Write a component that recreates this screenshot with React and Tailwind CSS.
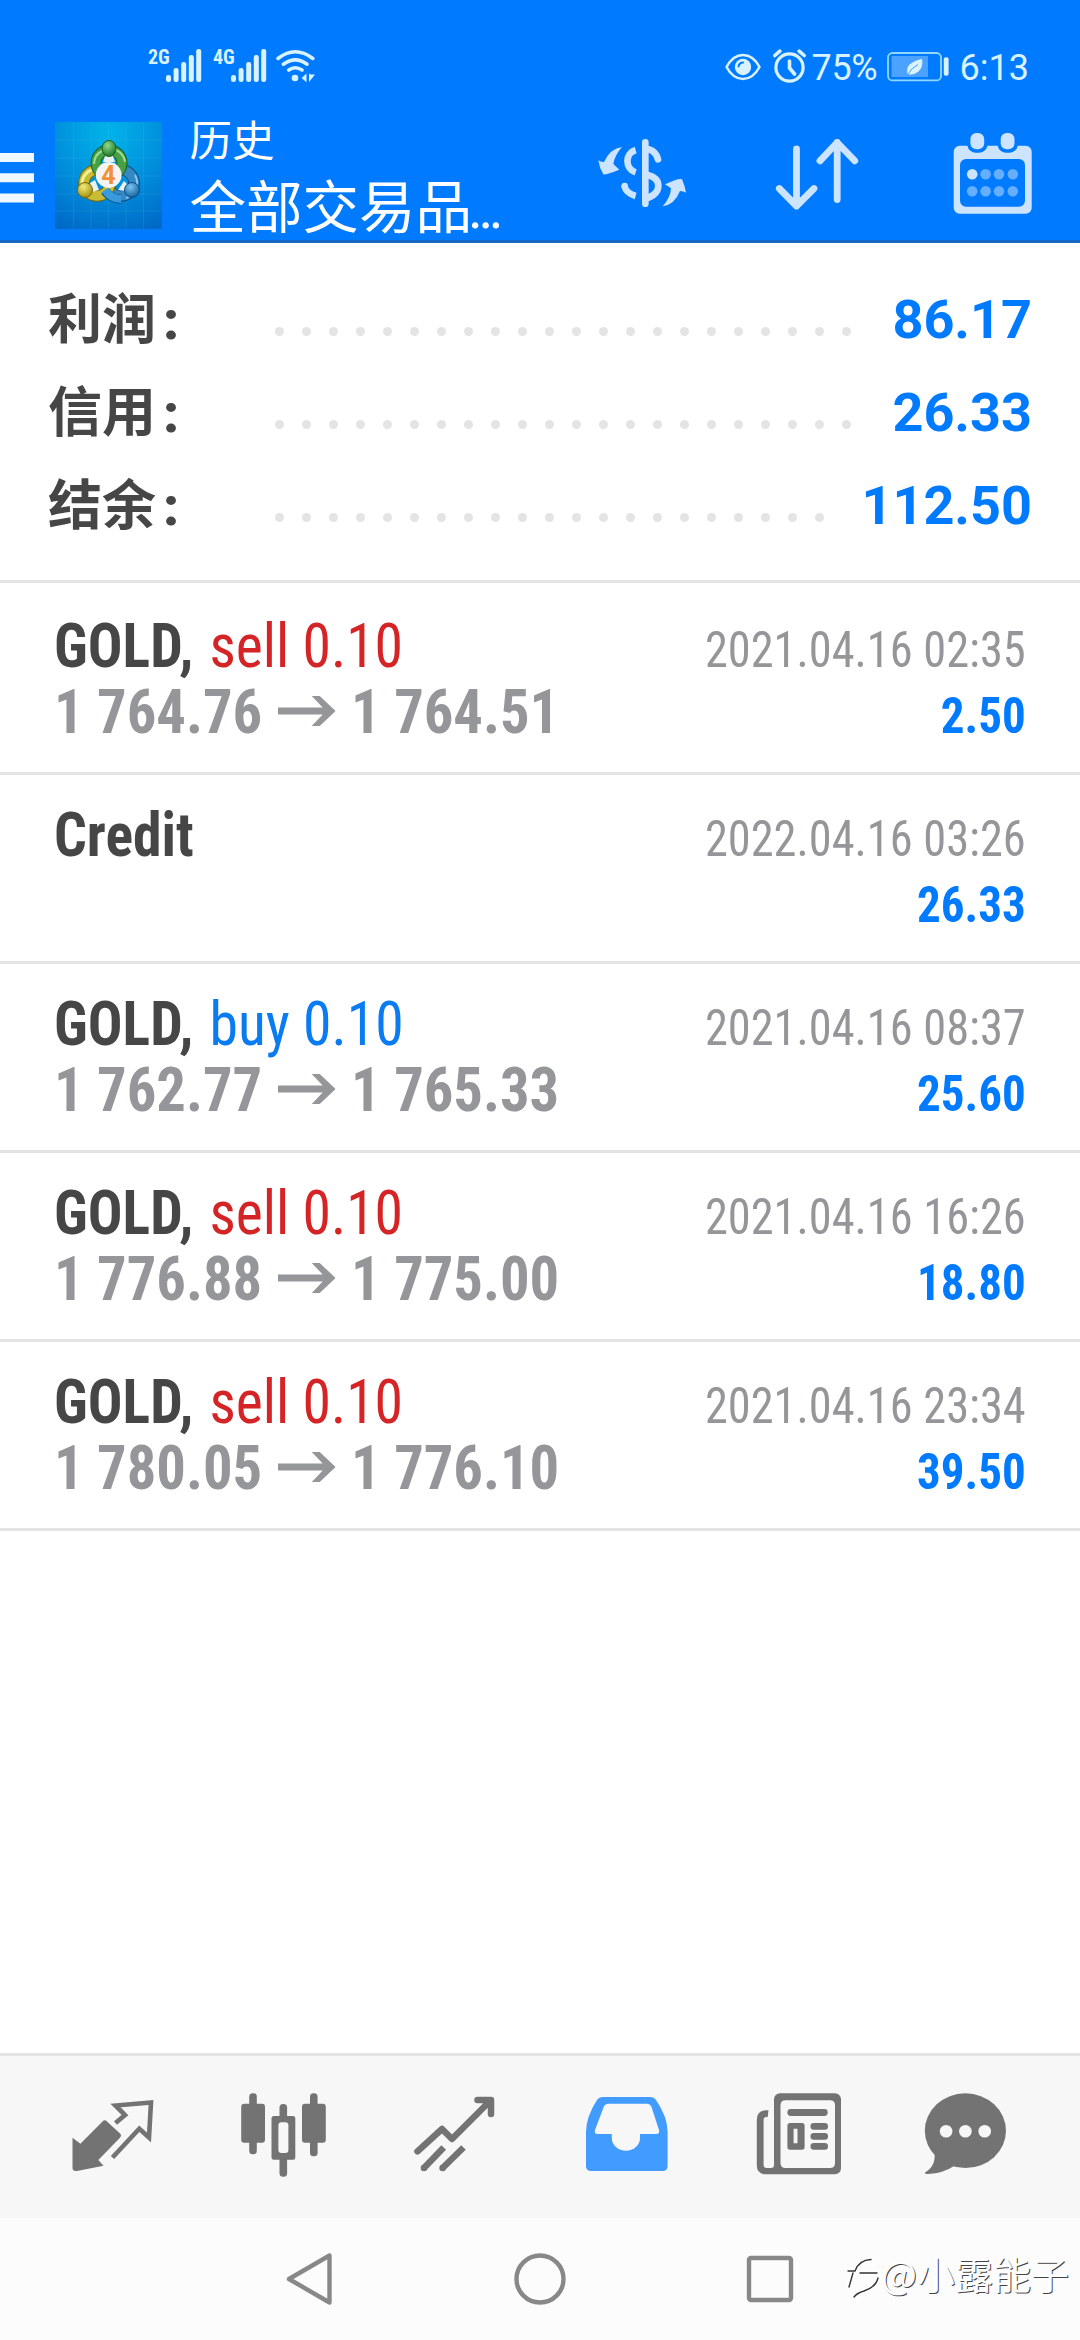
const summary = [
  { label: '利润', value: '86.17', dots: 22 },
  { label: '信用', value: '26.33', dots: 22 },
  { label: '结余', value: '112.50', dots: 21 },
];

const deals = [
  { id: 1, symbol: 'GOLD', side: 'sell', volume: '0.10', open: '1 764.76', close: '1 764.51', time: '2021.04.16 02:35', profit: '2.50' },
  { id: 2, symbol: 'Credit', time: '2022.04.16 03:26', profit: '26.33' },
  { id: 3, symbol: 'GOLD', side: 'buy', volume: '0.10', open: '1 762.77', close: '1 765.33', time: '2021.04.16 08:37', profit: '25.60' },
  { id: 4, symbol: 'GOLD', side: 'sell', volume: '0.10', open: '1 776.88', close: '1 775.00', time: '2021.04.16 16:26', profit: '18.80' },
  { id: 5, symbol: 'GOLD', side: 'sell', volume: '0.10', open: '1 780.05', close: '1 776.10', time: '2021.04.16 23:34', profit: '39.50' },
];

function Signal({ label }) {
  return (
    <div className="flex w-[54px]">
      <span className="w-[18px] font-['Roboto_Condensed'] font-bold text-[20px] leading-[18px]">{label}</span>
      <svg width="36" height="36" viewBox="0 0 36 36" fill="currentColor">
        <rect x="0" y="27" width="5" height="7" rx="2.3" />
        <rect x="7.6" y="20" width="5" height="14" rx="2.3" />
        <rect x="15.2" y="14" width="5" height="20" rx="2.3" />
        <rect x="22.8" y="7" width="5" height="27" rx="2.3" />
        <rect x="30.2" y="1" width="5" height="33" rx="2.3" />
      </svg>
    </div>
  );
}

function StatusBar() {
  return (
    <div className="flex h-[90px] items-start justify-between pl-[148px] pr-[51px] pt-[48px] text-[#d9f2ff]">
      <div className="flex">
        <Signal label="2G" />
        <div className="ml-[11px]"><Signal label="4G" /></div>
        <svg className="ml-[9px]" width="40" height="36" viewBox="0 0 40 36" fill="none" stroke="currentColor" strokeWidth="3.6" strokeLinecap="round">
          <path d="M2 10.5Q19.3-3 36.8 10.5M7.4 16.2Q19.3 7.5 31 16.2M12.8 22Q19.3 17.5 26 22" />
          <circle cx="19" cy="30" r="3.3" fill="currentColor" stroke="none" />
          <path d="M25.6 30l4.9-4.5v8.7zM33 25.5v8.5l6-7.5h-4z" fill="currentColor" stroke="none" />
        </svg>
      </div>

      <div className="flex">
        <svg className="mt-[5px]" width="36" height="28" viewBox="0 0 36 28" fill="none" stroke="currentColor">
          <path d="M1.5 14Q8 2 18 2T34.5 14Q28 26 18 26T1.5 14z" strokeWidth="2.6" strokeLinejoin="round" />
          <circle cx="18" cy="14" r="8.2" fill="currentColor" stroke="none" />
          <path d="M13.6 13.5Q14 10 18 9.6" stroke="#007aff" strokeWidth="2" strokeLinecap="round" />
        </svg>
        <svg className="ml-[12px] mt-px" width="34" height="35" viewBox="0 0 34 35" fill="none" stroke="currentColor" strokeWidth="3.2" strokeLinecap="round">
          <circle cx="16.5" cy="18.5" r="13.6" />
          <path d="M16.5 12v7l5 6M1.8 6.5l5-4.3M31.2 6.5l-5-4.3" strokeWidth="3.6" />
        </svg>
        <span className="ml-[5px] mt-[-1px] w-[68px] text-[36px] leading-[42px] tracking-[-0.4px]">75%</span>
        <svg className="ml-[7px] mt-[4px]" width="63" height="30" viewBox="0 0 63 30" fill="none">
          <rect x="1" y="1" width="53" height="27.4" rx="4.5" stroke="#8fd8ff" strokeWidth="1.8" />
          <rect x="4.6" y="4" width="36.4" height="21" fill="#4ca2ff" />
          <path d="M21 22.8Q18.5 17 22.5 12.5 26.5 9 35 6.7 36.5 15 31.5 19.5 27.5 23 22 22.3z" fill="#d9f2ff" />
          <path d="M20.5 23Q24 16 31 12.5" stroke="#4ca2ff" strokeWidth="1" />
          <rect x="56.8" y="5.3" width="4.8" height="18.5" rx="2" fill="#d9f2ff" />
        </svg>
        <span className="ml-[10px] mt-[-1px] text-[36px] leading-[42px]">6:13</span>
      </div>
    </div>
  );
}

function Logo() {
  return (
    <svg width="107" height="107" viewBox="0 0 107 107">
      <defs>
        <radialGradient id="bg" cx="0.5" cy="0.1" r="1">
          <stop offset="0" stopColor="#00b4ea" />
          <stop offset="0.5" stopColor="#0090dc" />
          <stop offset="1" stopColor="#0068c6" />
        </radialGradient>
        <radialGradient id="green" cx="0.4" cy="0.3" r="0.7">
          <stop offset="0" stopColor="#8fd98a" />
          <stop offset="1" stopColor="#1e7a2c" />
        </radialGradient>
        <radialGradient id="yellow" cx="0.4" cy="0.3" r="0.7">
          <stop offset="0" stopColor="#f3ea7a" />
          <stop offset="1" stopColor="#a39410" />
        </radialGradient>
        <radialGradient id="blue" cx="0.4" cy="0.3" r="0.7">
          <stop offset="0" stopColor="#7cc6f2" />
          <stop offset="1" stopColor="#14629f" />
        </radialGradient>
      </defs>
      <rect width="107" height="107" fill="url(#bg)" />
      <path d="M18.5 0v107M36 0v107M53.5 0v107M71 0v107M88.5 0v107M0 18h107M0 36h107M0 54h107M0 72h107M0 89h107" stroke="#5cc0f5" strokeOpacity="0.16" />
      <g fill="none">
        <circle cx="66" cy="61" r="13" stroke="#0f4f86" strokeWidth="11.5" />
        <circle cx="66" cy="61" r="13" stroke="#3488c4" strokeWidth="9.5" />
        <path d="M80 53a16 16 0 0 1-9 23" stroke="#86c8f0" strokeWidth="2" />
        <circle cx="42" cy="61" r="13" stroke="#766a0c" strokeWidth="11.5" />
        <circle cx="42" cy="61" r="13" stroke="#c9bc32" strokeWidth="9.5" />
        <path d="M27 62a15 15 0 0 1 14-15" stroke="#f4ee96" strokeWidth="3" />
        <path d="M50 69q6 8 16 8" stroke="#0f4f86" strokeWidth="9.500" />
        <path d="M50 68q6 9 16 9" stroke="#3a9bdc" strokeWidth="8" />
        <circle cx="54" cy="41" r="13" stroke="#1d5f25" strokeWidth="11" />
        <circle cx="54" cy="41" r="13" stroke="#46a044" strokeWidth="9" />
        <path d="M39 42a15 15 0 0 1 8-13M61 28a15 15 0 0 1 9 12" stroke="#9cdc94" strokeWidth="2" />
      </g>
      <path d="M50 34h8l2 6H48zM35 61l5-3 4 10-7 2zM63 68l6-9 3 3-2 7z" fill="#e9f3ee" />
      <ellipse cx="54" cy="26.5" rx="7" ry="8" fill="url(#green)" stroke="#1d5f25" />
      <ellipse cx="30" cy="68" rx="7.500" ry="7.5" fill="url(#yellow)" stroke="#766a0c" />
      <ellipse cx="77" cy="68" rx="7.500" ry="7.5" fill="url(#blue)" stroke="#0f4f86" />
      <circle cx="53.7" cy="53" r="12.9" fill="#f4f4f4" />
      <text x="53.500" y="62" textAnchor="middle" fontFamily="Roboto" fontSize="25" fontWeight="bold" fill="#f2903a">4</text>
    </svg>
  );
}

function Header() {
  return (
    <div className="flex h-[153px] items-start border-b-[3px] border-[#1668c4] pr-[42px] text-white">
      <svg className="mt-[63px] shrink-0" width="34" height="50" viewBox="0 0 34 50" fill="#eff8ff">
        <path d="M0 0h34v9H0zM0 20.3h34v9H0zM0 40.5h34v9H0z" />
      </svg>
      <div className="ml-[20.5px] mt-[32px] shrink-0"><Logo /></div>
      <div className="ml-[28px] mt-[27px] whitespace-nowrap">
        <div className="text-[42.5px] leading-[50px]">历史</div>
        <div className="mt-[9px] text-[56.5px] leading-[66px]">
          全部交易品<span className="ml-[-4px] tracking-[-4.5px]">...</span>
        </div>
      </div>
      <svg className="ml-auto mt-[40px]" width="110" height="90" viewBox="0 0 330 270" fill="none" stroke="#cce4ff" strokeWidth="20">
        <path d="M96 51Q60 56 42 96Q33 97 25 91Q28 114 40 133Q46 136 88 119L70 102Q74 76 96 51z" fill="#cce4ff" stroke="none" />
        <path d="M218 229Q254 224 270 183Q280 183 288 188Q284 166 276 148Q270 142 225 163L243 175Q242 202 218 229z" fill="#cce4ff" stroke="none" />
        <path d="M137 60C104 70 104 116 137 127M137 198Q108 190 103 167" />
        <circle cx="104" cy="168" r="10" fill="#cce4ff" stroke="none" />
        <path d="M166 37v184M176 58Q198 64 204 88" strokeLinecap="round" />
        <path d="M170 134Q205 142 205 167T170 205" />
      </svg>
      <svg className="ml-[70px] mt-[43px]" width="94" height="84" viewBox="0 0 94 84" fill="none" stroke="#cce4ff" strokeWidth="6.8" strokeLinecap="round" strokeLinejoin="round">
        <path d="M26.5 15.8V73M9.3 55.5L26.5 73L44 55.5M67.2 66.5V9.5M50 27.8L67.2 9.5L84.8 27.8" />
      </svg>
      <svg className="ml-[84px] mt-[40px]" width="90" height="90" viewBox="0 0 90 90">
        <path d="M11.6 15.7h7.800a8.500 8.500 0 0 0 8.500 7h3a8.500 8.500 0 0 0 8.500-7h10.300a8.500 8.500 0 0 0 8.500 7h3a8.500 8.500 0 0 0 8.500-7h8a6 6 0 0 1 6 6v56a6 6 0 0 1-6 6h-66a6 6 0 0 1-6-6v-56a6 6 0 0 1 6-6zM18 29a6 6 0 0 0-6 6v35.700a6 6 0 0 0 6 6h53a6 6 0 0 0 6-6V35a6 6 0 0 0-6-6z" fill="#cce4ff" fillRule="evenodd" />
        <rect x="22.4" y="3" width="13.8" height="16.3" rx="6" fill="#cce4ff" />
        <rect x="52.7" y="3" width="13.8" height="16.3" rx="6" fill="#cce4ff" />
        <g fill="#66afff">
          <circle cx="24.2" cy="44.3" r="5.3" fill="#cce4ff" />
          <circle cx="37.6" cy="44.3" r="5.3" />
          <circle cx="51" cy="44.3" r="5.3" />
          <circle cx="64.8" cy="44.3" r="5.3" />
          <circle cx="24.2" cy="61.3" r="5.3" />
          <circle cx="37.6" cy="61.3" r="5.3" />
          <circle cx="51" cy="61.3" r="5.3" />
          <circle cx="64.8" cy="61.3" r="5.3" />
        </g>
      </svg>
    </div>
  );
}

function SummaryRow({ label, value, dots }) {
  return (
    <div className="flex h-[93px] pl-[48px] pr-[48px] text-[54px] font-bold leading-[93px]">
      <span className="w-[227px] pt-px text-[#464646]">
        {label}<span className="ml-[7px] font-black">:</span>
      </span>
      <div className="flex gap-[18px] pt-[54px]">
        {Array.from({ length: dots }, (_, i) => (
          <i key={i} className="h-[9px] w-[9px] rounded-full bg-[#e4e4e4]" />
        ))}
      </div>
      <span className="ml-auto text-[#007aff]">{value}</span>
    </div>
  );
}

function DealRow({ deal }) {
  return (
    <div className="flex h-[189px] justify-between border-b-[3px] border-[#e4e4e4] px-[54px] font-['Roboto_Condensed'] whitespace-nowrap">
      <div className="pt-[27px] text-[62px] leading-[66px]">
        <div className="origin-left scale-x-[0.93]">
          <span className="font-bold text-[#464646]">{deal.symbol}{deal.side && ','}</span>
          {deal.side && (
            <span className={deal.side === 'sell' ? 'ml-[3px] text-[#d42426]' : 'ml-[3px] text-[#0a7bf0]'}> {deal.side} {deal.volume}</span>
          )}
        </div>
        {deal.open && (
          <div className="flex origin-left scale-x-[0.945] font-bold text-[#959699]">
            <span>{deal.open}</span>
            <svg className="ml-[17px] mr-[16px] mt-[16px]" width="61" height="32" viewBox="0 0 58 32" preserveAspectRatio="none" fill="currentColor">
              <path d="M0 12.500h45L34 1h8l16 15-16 15h-8l11-11.500H0z" />
            </svg>
            <span>{deal.close}</span>
          </div>
        )}
      </div>
      <div className="pt-[31px] text-right text-[50px] leading-[66px]">
        <div className="origin-right scale-x-[0.928] text-[#959699]">{deal.time}</div>
        <div className="origin-right scale-x-[0.94] font-bold text-[#007aff]">{deal.profit}</div>
      </div>
    </div>
  );
}

function TabBar() {
  return (
    <div className="flex h-[165px] items-center justify-around border-t-[3px] border-[#e4e4e4] bg-[#f7f7f7] px-[27px] text-[#737373]">
      {/* quotes */}
      <svg width="96" height="96" viewBox="0 0 96 96" fill="currentColor">
        <path d="M7.5 48.7L15.4 54.7L37.5 32.5Q39.8 30.2 42 32.5L55 44.5Q57 46.5 55 48.7L33.3 71L38.5 76.7L12 82Q7.5 82.5 7.5 79z" />
        <path d="M50.5 34L60 26L50.5 16.5L86 13.5L84 48.5L74.3 39.7L47.5 68.5" fill="none" stroke="currentColor" strokeWidth="4.6" />
      </svg>

      {/* charts */}
      <svg width="96" height="96" viewBox="0 0 96 96" fill="currentColor">
        <rect x="5.2" y="14.7" width="23.8" height="39" rx="3" />
        <rect x="13.2" y="4.3" width="7.6" height="61" rx="3.5" />
        <rect x="66" y="14.7" width="23.8" height="39" rx="3" />
        <rect x="74" y="4.3" width="7.6" height="63" rx="3.5" />
        <rect x="43.5" y="15" width="7.6" height="16" rx="3.5" />
        <rect x="43.5" y="66" width="7.6" height="21.7" rx="3.5" />
        <path d="M38 27h18.800a2.500 2.500 0 0 1 2.500 2.500v38.700a2.500 2.500 0 0 1-2.500 2.500H38a2.500 2.500 0 0 1-2.500-2.500V29.500A2.500 2.500 0 0 1 38 27zM45.400 33.300a3 3 0 0 0-3 3V61a3 3 0 0 0 3 3h4a3 3 0 0 0 3-3V36.300a3 3 0 0 0-3-3z" fillRule="evenodd" />
      </svg>

      {/* trade */}
      <svg width="96" height="96" viewBox="0 0 96 96" fill="none" stroke="currentColor" strokeWidth="6.5" strokeLinejoin="round">
        <path d="M10.5 62.3L35 40L45 50L83 12M70.5 11H84V25" strokeLinecap="round" />
        <path d="M16.7 79.3L36.7 58.5M35.3 79.3L56.5 58.5" />
        <circle cx="17" cy="79" r="3.3" fill="currentColor" stroke="none" />
        <circle cx="35.6" cy="79" r="3.3" fill="currentColor" stroke="none" />
      </svg>

      {/* history */}
      <svg width="96" height="96" viewBox="0 0 96 96" fill="#429bff">
        <path d="M25 8h47q4 0 6 3Q89.6 28 89.6 43v34q0 5-5 5H13q-5 0-5-5V43Q8 28 19 11q2-3 6-3zM31 14.700q-4 0-5.300 3.300L17 41q-1 4 2.500 4h14.300v4a14 12.700 0 0 0 28.200 0v-4h16q4 0 3-4L73.500 18q-1.500-3.300-5-3.300z" fillRule="evenodd" />
      </svg>

      {/* news */}
      <svg width="96" height="96" viewBox="0 0 96 96" fill="currentColor">
        <path d="M31 4.300h55a6 6 0 0 1 6 6v69a6 6 0 0 1-6 6H17q-9.200 0-9.200-9V31q0-9.700 9.200-9.700h2.500l-.8 6.700h-1.500q-2.600 0-2.600 3v45q0 3 3 3H22q3 0 3-3V10.300a6 6 0 0 1 6-6zM36.500 11.300q-5 0-5 5V74q0 5 5 5H81q5 0 5-5V16.300q0-5-5-5z" fillRule="evenodd" />
        <rect x="38.4" y="20" width="40.3" height="7" rx="3.4" />
        <path d="M41 34h12a2.600 2.600 0 0 1 2.600 2.600v21.500a2.600 2.600 0 0 1-2.600 2.600H41a2.600 2.600 0 0 1-2.600-2.600V36.600A2.600 2.600 0 0 1 41 34zM44.600 39.700v14.600h3.900V39.700z" fillRule="evenodd" />
        <rect x="61.5" y="34" width="17.5" height="6.7" rx="3.3" />
        <rect x="61.5" y="44" width="17.5" height="6.7" rx="3.3" />
        <rect x="61.5" y="54" width="17.5" height="6.7" rx="3.3" />
      </svg>

      {/* messages */}
      <svg width="96" height="96" viewBox="0 0 96 96" fill="currentColor">
        <ellipse cx="45.4" cy="41.7" rx="40.6" ry="37.4" />
        <path d="M14.5 64Q16 77 5 83.5Q5 85 8 85Q24 84 34 77z" />
        <g fill="#f7f7f7">
          <circle cx="26.1" cy="42.3" r="6.3" />
          <circle cx="45.4" cy="42.3" r="6.3" />
          <circle cx="64.7" cy="42.3" r="6.3" />
        </g>
      </svg>
    </div>
  );
}

function SystemNav() {
  return (
    <div className="relative flex h-[122px] items-center justify-center gap-[176px] bg-[#fcfcfc]">
      <svg width="54" height="54" viewBox="0 0 54 54" fill="none" stroke="#888" strokeWidth="4.4" strokeLinejoin="round">
        <path d="M46.500 3.5v47L6 27z" />
      </svg>
      <svg width="54" height="54" viewBox="0 0 54 54" fill="none" stroke="#888" strokeWidth="4.4">
        <circle cx="27" cy="27" r="23.5" />
      </svg>
      <svg width="54" height="54" viewBox="0 0 54 54" fill="none" stroke="#888" strokeWidth="4.4">
        <rect x="6" y="6" width="42" height="42" rx="2" />
      </svg>

      <div className="absolute left-[843px] top-[30px] flex items-start text-white [text-shadow:1px_1px_0.5px_#444]">
        <svg className="mt-[6px]" width="38" height="46" viewBox="0 0 38 46" fill="none" strokeLinecap="round">
          <path d="M5 34Q9 20 14 13Q22 5 30 10M6 17h9M20 19h17Q36 32 20 37L13 43" stroke="#fff" strokeWidth="5" />
          <path d="M6 33l4-14M5 17h7Q16 6 28 5.500M17 19h17M35 24Q33 33 21 37Q14 39 11 43" stroke="#333" strokeWidth="1.4" />
        </svg>
        <span className="mt-[-1px] text-[38px] leading-[52px] font-['Noto_Sans_CJK_SC',sans-serif]">@小露能子</span>
      </div>
    </div>
  );
}

export default function App() {
  return (
    <div className="flex h-[2340px] w-[1080px] flex-col overflow-hidden bg-white font-[Roboto,'Noto_Sans_CJK_SC',sans-serif]">
      <div className="bg-[#007aff]">
        <StatusBar />
        <Header />
      </div>

      <div className="h-[340px] border-b-[3px] border-[#e4e4e4] pt-[30px]">
        {summary.map((row) => (
          <SummaryRow key={row.label} {...row} />
        ))}
      </div>

      <div className="flex-1 pt-[3px]">
        {deals.map((deal) => (
          <DealRow key={deal.id} deal={deal} />
        ))}
      </div>

      <TabBar />
      <SystemNav />
    </div>
  );
}
